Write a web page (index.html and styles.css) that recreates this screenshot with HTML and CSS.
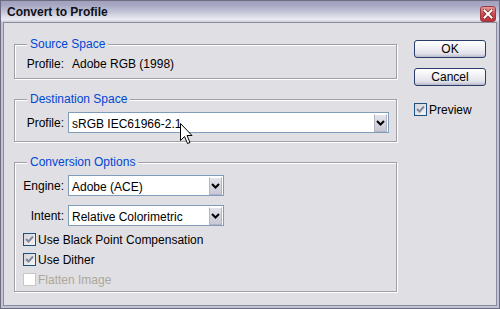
FILE: index.html
```html
<!DOCTYPE html>
<html lang="en">
<head>
  <meta charset="UTF-8">
  <meta name="viewport" content="width=device-width, initial-scale=1.0">
  <title>Convert to Profile</title>
  <link rel="stylesheet" href="styles.css">
</head>
<body>
  <div class="window">
    <div class="titlebar">
      <span class="title">Convert to Profile</span>
      <span class="close">
        <svg width="10" height="10" viewBox="0 0 10 10">
          <path d="M1.5 1.5 L8.5 8.5 M8.5 1.5 L1.5 8.5" stroke="#7a2020" stroke-width="3.4" stroke-linecap="square"/>
          <path d="M1.5 1.5 L8.5 8.5 M8.5 1.5 L1.5 8.5" stroke="#fff" stroke-width="2" stroke-linecap="square"/>
        </svg>
      </span>
    </div>
    <div class="client">
      <div class="groups">
        <fieldset class="group">
          <legend>Source Space</legend>
          <div class="row">
            <span class="label">Profile:</span>
            <span class="value">Adobe RGB (1998)</span>
          </div>
        </fieldset>

        <fieldset class="group dest">
          <legend>Destination Space</legend>
          <div class="row">
            <span class="label">Profile:</span>
            <div class="combo wide">
              <span class="combo-text">sRGB IEC61966-2.1</span>
              <span class="combo-arrow">
                <svg width="9" height="6" viewBox="0 0 9 6"><path d="M1 1 L4.5 4.5 L8 1" fill="none" stroke="#000" stroke-width="2"/></svg>
              </span>
            </div>
          </div>
        </fieldset>

        <fieldset class="group options">
          <legend>Conversion Options</legend>
          <div class="row">
            <span class="label">Engine:</span>
            <div class="combo">
              <span class="combo-text">Adobe (ACE)</span>
              <span class="combo-arrow">
                <svg width="9" height="6" viewBox="0 0 9 6"><path d="M1 1 L4.5 4.5 L8 1" fill="none" stroke="#000" stroke-width="2"/></svg>
              </span>
            </div>
          </div>
          <div class="row">
            <span class="label">Intent:</span>
            <div class="combo">
              <span class="combo-text">Relative Colorimetric</span>
              <span class="combo-arrow">
                <svg width="9" height="6" viewBox="0 0 9 6"><path d="M1 1 L4.5 4.5 L8 1" fill="none" stroke="#000" stroke-width="2"/></svg>
              </span>
            </div>
          </div>
          <div class="checks">
            <div class="check">
              <span class="box"><svg width="11" height="11" viewBox="0 0 11 11"><path d="M2 5 L4.5 7.5 L9 2.5" fill="none" stroke="#8088a0" stroke-width="2"/></svg></span>
              Use Black Point Compensation
            </div>
            <div class="check">
              <span class="box"><svg width="11" height="11" viewBox="0 0 11 11"><path d="M2 5 L4.5 7.5 L9 2.5" fill="none" stroke="#8088a0" stroke-width="2"/></svg></span>
              Use Dither
            </div>
            <div class="check disabled">
              <span class="box"></span>
              Flatten Image
            </div>
          </div>
        </fieldset>
      </div>

      <div class="actions">
        <button class="btn">OK</button>
        <button class="btn">Cancel</button>
        <div class="check preview">
          <span class="box"><svg width="11" height="11" viewBox="0 0 11 11"><path d="M2 5 L4.5 7.5 L9 2.5" fill="none" stroke="#8088a0" stroke-width="2"/></svg></span>
          Preview
        </div>
      </div>
    </div>

    <svg class="cursor" width="13" height="22" viewBox="0 0 13 22">
      <path d="M0.5 0.5 V17.5 L4.5 13.5 L7.5 20.5 L10 19.5 L7 12.5 H12 Z" fill="#fff" stroke="#000" stroke-width="1" stroke-linejoin="miter"/>
    </svg>
  </div>
</body>
</html>
```

FILE: styles.css
```css
body {
  margin: 0;
  font-family: 'Liberation Sans', Arial, sans-serif;
  font-size: 12px;
  color: #000;
  background: #fff;
}

.window {
  position: relative;
  width: 500px;
  height: 309px;
  box-sizing: border-box;
  border: 1px solid #6c6c82;
  background: #c2c2d2;
  display: flex;
  flex-direction: column;
}

.titlebar {
  height: 21px;
  display: flex;
  align-items: center;
  justify-content: space-between;
  padding: 0 3px 0 6px;
  background: linear-gradient(to bottom, #a0a0bc 0%, #a8a8c4 20%, #c2c2d6 50%, #dedeea 75%, #eaeaf0 88%, #cdcddb 100%);
}

.title {
  font-weight: bold;
  font-size: 12px;
  color: #101018;
}

.close {
  width: 16px;
  height: 16px;
  margin-top: 5px;
  box-sizing: border-box;
  border: 1px solid #9a3a40;
  border-radius: 3px;
  background: linear-gradient(to bottom, #e49a9a, #cc4c50 50%, #b8343a);
  display: flex;
  align-items: center;
  justify-content: center;
}

.client {
  flex: 1;
  display: flex;
  margin: 0 2px 2px;
  padding: 14px 10px 0;
  border: 1px solid #8a8aa0;
  background: #e0dfe3;
}

.groups {
  width: 383px;
  display: flex;
  flex-direction: column;
  gap: 13px;
}

.group {
  margin: 0;
  padding: 6px 10px 7px 5px;
  min-width: 0;
  border: 1px solid #a0a0a4;
  box-shadow: 1px 1px 0 #fff, inset 1px 1px 0 #fff;
}

.group.dest {
  padding-bottom: 8px;
}

.group.options {
  padding-top: 6px;
  padding-bottom: 1px;
}

.group legend {
  margin-left: 7px;
  padding: 0 3px;
  line-height: 14px;
  color: #0046d5;
  background: #e0dfe3;
}

.row {
  display: grid;
  grid-template-columns: 44px 1fr;
  column-gap: 4px;
  align-items: center;
  line-height: 14px;
}

.row + .row {
  margin-top: 9px;
}

.label {
  text-align: right;
  white-space: nowrap;
}

.value {
  padding-left: 4px;
}

.combo {
  width: 156px;
  height: 21px;
  box-sizing: border-box;
  border: 1px solid #7f9db9;
  background: #fff;
  display: flex;
  align-items: center;
  justify-content: space-between;
  padding: 1px 1px 0 3px;
}

.combo.wide {
  width: 321px;
}

.combo-text {
  padding-top: 2px;
  white-space: nowrap;
}

.combo-arrow {
  width: 13px;
  height: 18px;
  box-sizing: border-box;
  border: 1px solid #b4b4c6;
  border-top-color: #fff;
  background: linear-gradient(to bottom, #e4e4ec, #c8c8d6);
  display: flex;
  align-items: center;
  justify-content: center;
  align-self: flex-start;
}

.checks {
  margin-top: 4px;
}

.check {
  display: flex;
  align-items: center;
  gap: 2px;
  height: 20px;
  margin-left: 3px;
  white-space: nowrap;
}

.box {
  width: 13px;
  height: 13px;
  box-sizing: border-box;
  border: 1px solid #1c5180;
  background: linear-gradient(135deg, #d4d4d8, #f6f6f8);
  display: flex;
  align-items: center;
  justify-content: center;
  margin-bottom: 2px;
}

.check.disabled {
  color: #aca899;
}

.check.disabled .box {
  border-color: #cac8bb;
  background: #fff;
}

.actions {
  margin: 3px 0 0 17px;
  display: flex;
  flex-direction: column;
  width: 72px;
}

.btn {
  height: 18px;
  padding: 0;
  font-family: inherit;
  font-size: 12px;
  line-height: 14px;
  color: #000;
  border: 1px solid #2a3c6a;
  border-radius: 3px;
  background: linear-gradient(to bottom, #ffffff 0%, #f2f2f6 40%, #e0e0e8 80%, #b8b8cc 100%);
}

.btn + .btn {
  margin-top: 10px;
}

.check.preview {
  margin: 14px 0 0 0;
}

.cursor {
  position: absolute;
  left: 179px;
  top: 122px;
}
```
